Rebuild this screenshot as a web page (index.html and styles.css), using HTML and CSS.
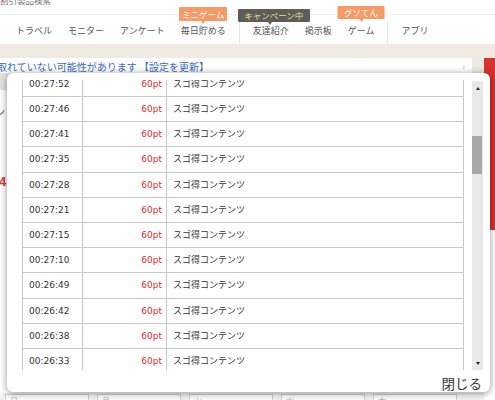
FILE: index.html
```html
<!DOCTYPE html>
<html lang="ja">
<head>
<meta charset="utf-8">
<title>ポイント履歴</title>
<link rel="stylesheet" href="styles.css">
</head>
<body>
<header class="site-header">
  <div class="topbar"><span class="topbar-text">割引製品検索</span></div>
  <nav class="gnav">
    <a class="gnav-item">トラベル</a>
    <a class="gnav-item">モニター</a>
    <a class="gnav-item">アンケート</a>
    <a class="gnav-item">毎日貯める<span class="badge badge-orange badge-mini">ミニゲーム</span></a>
    <span class="gnav-sep"></span>
    <a class="gnav-item after-sep">友達紹介<span class="badge badge-dark">キャンペーン中</span></a>
    <a class="gnav-item">掲示板</a>
    <a class="gnav-item">ゲーム<span class="badge badge-orange badge-game">グソてん</span></a>
    <span class="gnav-sep"></span>
    <a class="gnav-item after-sep">アプリ</a>
  </nav>
</header>
<div class="band"></div>
<div class="body-row">
  <div class="main">
    <div class="notice-row">
      <div class="notice"><span class="notice-text">取れていない可能性があります 【設定を更新】</span><span class="chev">›</span></div>
      <div class="notice-end"></div>
    </div>
    <div class="content">
      <div class="content-head"></div>
      <p class="content-kana">ン</p>
      <p class="content-num">4,</p>
    </div>
    <div class="boxes">
      <div class="box">日</div>
      <div class="box">月</div>
      <div class="box">火</div>
      <div class="box">水</div>
      <div class="box">木</div>
    </div>
  </div>
  <aside class="aside"><div class="aside-red"></div></aside>
</div>

<div class="modal">
  <div class="modal-scroll">
    <div class="log">
      <div class="log-inner">
        <div class="log-row"><span class="c-time">00:27:52</span><span class="c-pt">60pt</span><span class="c-name">スゴ得コンテンツ</span></div>
        <div class="log-row"><span class="c-time">00:27:46</span><span class="c-pt">60pt</span><span class="c-name">スゴ得コンテンツ</span></div>
        <div class="log-row"><span class="c-time">00:27:41</span><span class="c-pt">60pt</span><span class="c-name">スゴ得コンテンツ</span></div>
        <div class="log-row"><span class="c-time">00:27:35</span><span class="c-pt">60pt</span><span class="c-name">スゴ得コンテンツ</span></div>
        <div class="log-row"><span class="c-time">00:27:28</span><span class="c-pt">60pt</span><span class="c-name">スゴ得コンテンツ</span></div>
        <div class="log-row"><span class="c-time">00:27:21</span><span class="c-pt">60pt</span><span class="c-name">スゴ得コンテンツ</span></div>
        <div class="log-row"><span class="c-time">00:27:15</span><span class="c-pt">60pt</span><span class="c-name">スゴ得コンテンツ</span></div>
        <div class="log-row"><span class="c-time">00:27:10</span><span class="c-pt">60pt</span><span class="c-name">スゴ得コンテンツ</span></div>
        <div class="log-row"><span class="c-time">00:26:49</span><span class="c-pt">60pt</span><span class="c-name">スゴ得コンテンツ</span></div>
        <div class="log-row"><span class="c-time">00:26:42</span><span class="c-pt">60pt</span><span class="c-name">スゴ得コンテンツ</span></div>
        <div class="log-row"><span class="c-time">00:26:38</span><span class="c-pt">60pt</span><span class="c-name">スゴ得コンテンツ</span></div>
        <div class="log-row"><span class="c-time">00:26:33</span><span class="c-pt">60pt</span><span class="c-name">スゴ得コンテンツ</span></div>
      </div>
    </div>
    <div class="sbar">
      <div class="sbar-btn"><span class="tri-up"></span></div>
      <div class="sbar-track"><div class="sbar-thumb"></div></div>
      <div class="sbar-btn"><span class="tri-down"></span></div>
    </div>
  </div>
  <div class="modal-foot"><a class="close">閉じる</a></div>
</div>
</body>
</html>
```
FILE: styles.css
```css
* { box-sizing: border-box; margin: 0; padding: 0; }
html, body { width: 495px; height: 400px; overflow: hidden; background: #fff; }
body { font-family: "Noto Sans CJK JP", sans-serif; color: #333; position: relative; }

.topbar { height: 15px; border-bottom: 1px solid #efefef; overflow: hidden; }
.topbar-text { display: block; font-size: 8.5px; line-height: 10px; margin-top: -5px; color: #777; }

.gnav { display: flex; align-items: flex-start; height: 29px; padding: 11px 0 0 16px; }
.gnav-item { position: relative; font-size: 9px; line-height: 10px; color: #555; margin-left: 16px; white-space: nowrap; }
.gnav-item:first-child { margin-left: 0; }
.gnav-item.after-sep { margin-left: 13px; }
.gnav-sep { width: 1px; height: 21px; margin: -4px 0 0 13px; background: #e3e3e3; }

.badge { position: absolute; top: -19px; left: 50%; transform: translateX(-50%); height: 14px; line-height: 14px; font-size: 8.5px; text-align: center; border-radius: 1px; white-space: nowrap; }
.badge::after { content: ""; position: absolute; left: 50%; bottom: -3px; margin-left: -2px; border-left: 2px solid transparent; border-right: 2px solid transparent; border-top: 3px solid currentColor; }
.badge-orange { background: #f79a66; color: #fff; }
.badge-orange::after { border-top-color: #f79a66; }
.badge-mini { width: 48px; }
.badge-game { width: 47px; top: -20px; height: 13px; line-height: 13px; }
.badge-dark { width: 72px; margin-left: 3px; top: -17px; height: 13px; line-height: 13px; background: #5c5c5c; color: #f2df72; }
.badge-dark::after { border-top-color: #5c5c5c; margin-left: -6px; }

.band { height: 14px; background: #efebe3; }

.body-row { display: flex; }
.main { flex: 1; min-width: 0; }
.aside { width: 11px; }
.aside-red { height: 172px; background: #d8312f; }

.notice-row { display: flex; height: 15px; }
.notice { flex: 1; display: flex; align-items: flex-start; background: #fff; padding-top: 2px; }
.notice-text { flex: 1; font-size: 10px; line-height: 14px; color: #3b6bc4; text-indent: -3px; white-space: nowrap; overflow: hidden; }
.chev { font-size: 10px; line-height: 12px; color: #bbb; margin-right: 7px; }
.notice-end { width: 12px; background: #eeeae2; }

.content { height: 320px; background: #fff; }
.content-head { height: 17px; background: #e2e2e2; }
.content-kana { font-size: 10px; line-height: 12px; color: #555; margin: 16px 0 0 -5px; }
.content-num { font-size: 13px; line-height: 14px; font-weight: bold; color: #e03030; margin: 57px 0 0 -1px; font-family: "Liberation Sans", sans-serif; }

.boxes { display: flex; gap: 8px; padding: 1px 0 0 5px; height: 7px; background: #f1f1f1; overflow: hidden; }
.box { width: 84px; height: 20px; flex: none; border: 1px solid #cdcdcd; background: #fbfbfb; font-size: 8px; line-height: 12px; color: #aaa; padding-left: 4px; }

.modal { position: absolute; left: 7px; top: 73px; width: 483px; height: 319px; background: #fff; border-radius: 6px; box-shadow: 0 1px 7px rgba(0,0,0,.45); padding: 7px 7px 0 15px; display: flex; flex-direction: column; }
.modal-scroll { display: flex; height: 290px; gap: 8px; }
.log { width: 442px; height: 290px; flex: none; overflow: hidden; border-left: 1px solid #c8c8c8; border-right: 1px solid #c8c8c8; }
.log-inner { margin-top: -8.2px; }
.log-row { display: flex; height: 25.2px; border-bottom: 1px solid #c8c8c8; font-family: "DejaVu Sans", "Noto Sans CJK JP", sans-serif; font-size: 9px; line-height: 24.2px; color: #333; }
.c-time { width: 60px; flex: none; padding-left: 6px; border-right: 1px solid #c8c8c8; }
.c-pt { width: 84px; flex: none; padding-right: 4px; text-align: right; color: #e02b2b; border-right: 1px solid #c8c8c8; }
.c-name { flex: 1; padding-left: 6px; font-family: "Noto Sans CJK JP", sans-serif; }

.sbar { width: 11px; flex: none; margin-top: 1px; height: 289px; background: #e8e8e8; display: flex; flex-direction: column; }
.sbar-btn { height: 14px; display: flex; align-items: center; justify-content: center; }
.tri-up { width: 0; height: 0; border-left: 2.5px solid transparent; border-right: 2.5px solid transparent; border-bottom: 3px solid #222; }
.tri-down { width: 0; height: 0; border-left: 2.5px solid transparent; border-right: 2.5px solid transparent; border-top: 3px solid #222; }
.sbar-track { flex: 1; }
.sbar-thumb { margin-top: 41px; width: 10px; height: 38px; background: #a8a8a8; }

.modal-foot { height: 22px; text-align: right; padding-right: 1px; }
.close { font-size: 13.5px; line-height: 22px; color: #333; }
```
